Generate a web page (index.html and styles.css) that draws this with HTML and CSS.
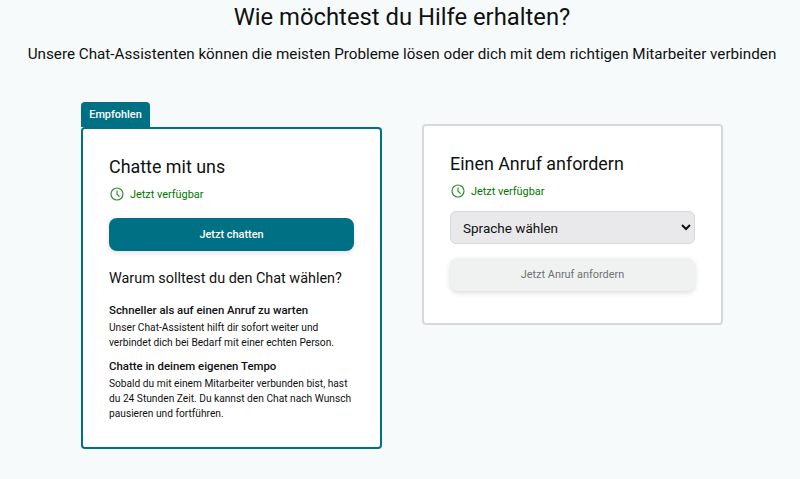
FILE: index.html
```html
<!DOCTYPE html>
<html lang="de">
<head>
<meta charset="utf-8">
<title>Hilfe</title>
<link rel="stylesheet" href="styles.css">
</head>
<body>
<main class="page">
  <header class="intro">
    <h1>Wie möchtest du Hilfe erhalten?</h1>
    <p>Unsere Chat-Assistenten können die meisten Probleme lösen oder dich mit dem richtigen Mitarbeiter verbinden</p>
  </header>
  <div class="options">
    <section class="option">
      <div class="tab">Empfohlen</div>
      <div class="card card-featured">
        <h2>Chatte mit uns</h2>
        <div class="status">
          <svg class="clock" viewBox="0 0 14 14" width="14" height="14"><circle cx="7" cy="7" r="6"/><path d="M7 3.4V7.2L9.6 9.6"/></svg>
          <span>Jetzt verfügbar</span>
        </div>
        <button class="btn btn-primary">Jetzt chatten</button>
        <h3>Warum solltest du den Chat wählen?</h3>
        <h4>Schneller als auf einen Anruf zu warten</h4>
        <p class="body">Unser Chat-Assistent hilft dir sofort weiter und verbindet dich bei Bedarf mit einer echten Person.</p>
        <h4 class="second">Chatte in deinem eigenen Tempo</h4>
        <p class="body">Sobald du mit einem Mitarbeiter verbunden bist, hast du 24 Stunden Zeit. Du kannst den Chat nach Wunsch pausieren und fortführen.</p>
      </div>
    </section>
    <section class="option option-call">
      <div class="card card-plain">
        <h2>Einen Anruf anfordern</h2>
        <div class="status">
          <svg class="clock" viewBox="0 0 14 14" width="14" height="14"><circle cx="7" cy="7" r="6"/><path d="M7 3.4V7.2L9.6 9.6"/></svg>
          <span>Jetzt verfügbar</span>
        </div>
        <select class="lang"><option>Sprache wählen</option></select>
        <button class="btn btn-disabled" disabled>Jetzt Anruf anfordern</button>
      </div>
    </section>
  </div>
</main>
</body>
</html>
```
FILE: styles.css
```css
* { box-sizing: border-box; }
html, body { margin: 0; height: 479px; overflow: hidden; }
body {
  background: #f7fafa;
  color: #0f1111;
  font-family: Roboto, "Liberation Sans", sans-serif;
}
.page { padding-top: 1px; }
.intro { text-align: center; padding-left: 4px; }
h1 { margin: 0; font-size: 23.8px; line-height: 32px; font-weight: 400; }
.intro p { margin: 11px 0 0; font-size: 15.22px; line-height: 20px; }
.options { display: flex; align-items: flex-start; margin: 0 0 0 81px; padding-top: 38px; gap: 40px; }
.option { width: 301px; display: flex; flex-direction: column; align-items: flex-start; }
.option-call { margin-top: 22px; }
.tab {
  background: #007185; color: #fff;
  width: 69px; height: 25px;
  border-radius: 4px 4px 0 0;
  font-size: 10.9px; font-weight: 500; line-height: 25px; text-align: center;
}
.card { width: 301px; background: #fff; border-radius: 4px; }
.card-featured { border: 2px solid #007185; height: 322px; padding: 26px 20px 0 26px; }
.card-plain { border: 2px solid #d5d9d9; height: 201px; padding: 26px 26px 0; }
h2 { margin: 0; font-size: 17.9px; line-height: 24px; font-weight: 400; }
.status { display: flex; align-items: center; gap: 6px; margin-top: 5px; height: 20px; color: #007600; font-size: 10.9px; }
.clock { fill: none; stroke: #2f8f2f; stroke-width: 1.2; flex: none; margin-left: 1px; }
.btn {
  display: block; width: 245px; height: 33px; margin-top: 14px; border: 0; border-radius: 8px;
  font: 500 10.9px/33px Roboto, "Liberation Sans", sans-serif;
  text-align: center; padding: 0;
}
.btn-primary { background: #007185; color: #fff; box-shadow: 0 2px 5px rgba(15,17,17,.12); }
.btn-disabled { background: #f0f2f2; color: #6f7373; margin-top: 14px; font-weight: 400; box-shadow: 0 2px 5px rgba(15,17,17,.15); }
.lang {
  display: block; width: 245px; height: 33px; margin-top: 10px;
  background: #e9e9ec; color: #0f1111; border: 1px solid #d5d9d9; border-radius: 6px;
  font: 400 13.5px Roboto, "Liberation Sans", sans-serif; padding: 0 8px;
}
h3 { margin: 18px 0 0; font-size: 14.4px; line-height: 20px; font-weight: 400; }
h4 { margin: 13px 0 0; font-size: 11.4px; line-height: 16px; font-weight: 500; }
h4.second { margin-top: 8px; }
.body { margin: 2px 0 0; font-size: 10.2px; line-height: 15px; color: #0f1111; }
```
